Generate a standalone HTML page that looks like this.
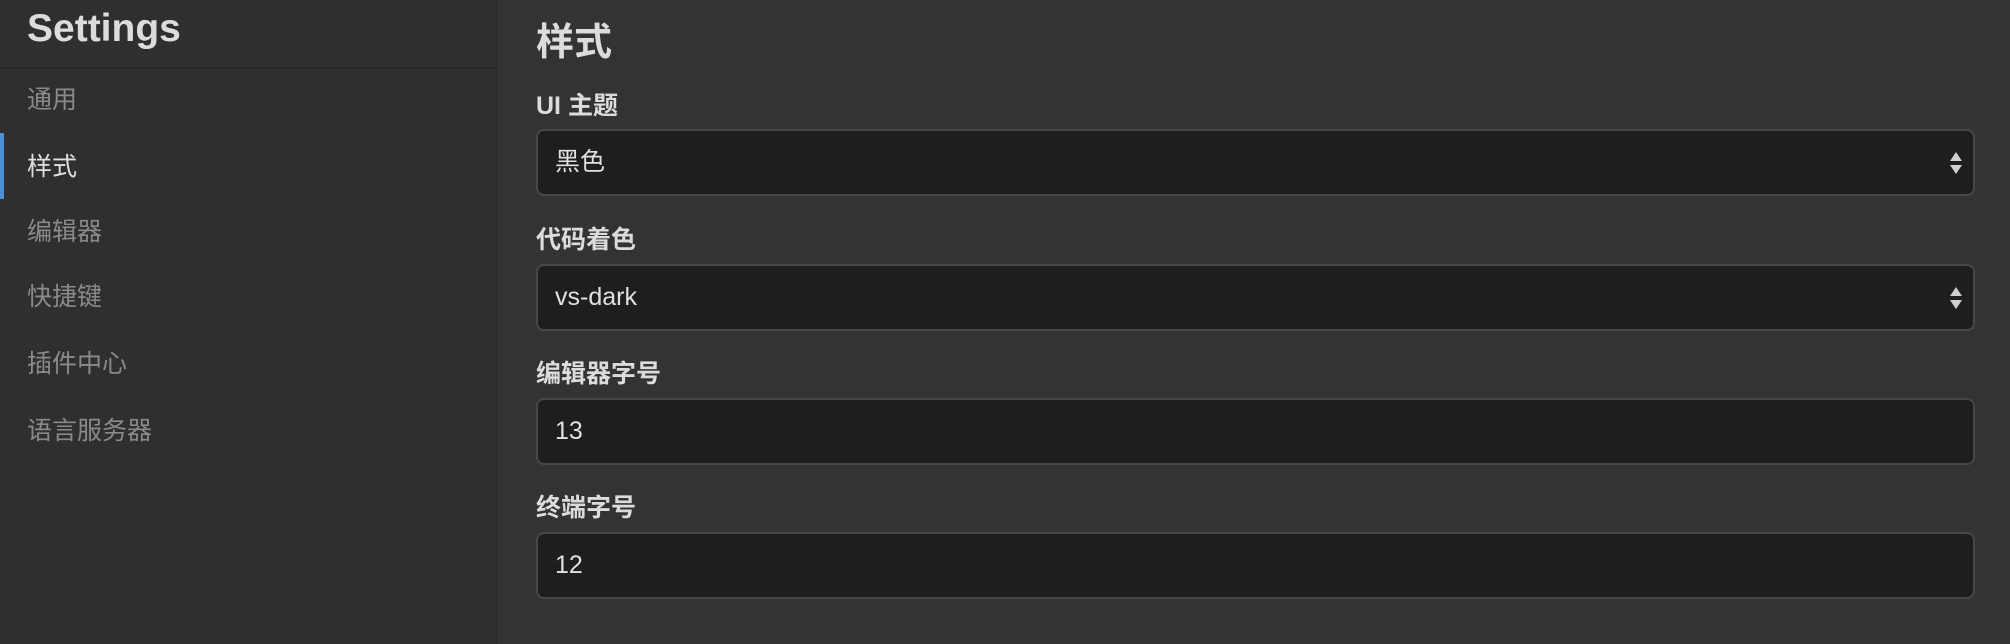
<!DOCTYPE html>
<html><head><meta charset="utf-8"><style>
*{margin:0;padding:0;box-sizing:border-box}
body{width:2010px;height:644px;background:#333333;font-family:"Liberation Sans","Noto Sans CJK SC",sans-serif;position:relative;overflow:hidden;color:#ddd}
.side{position:absolute;left:0;top:0;width:497px;height:644px;background:#2f2f2f;border-right:1px solid #2a2a2a}
.title{position:absolute;left:27px;top:7px;font-size:39px;font-weight:bold;color:#dcdcdc}
.hline{position:absolute;left:0;top:67px;width:497px;height:2px;background:#2a2a2a}
.item{position:absolute;left:27px;font-size:25px;color:#8a8a8a;line-height:30px}
.item.active{color:#e0e0e0}
.bar{position:absolute;left:0;top:133px;width:4px;height:66px;background:#4a90d9}
h1{position:absolute;left:536px;top:21px;font-size:38px;font-weight:bold;color:#dcdcdc;line-height:44px}
.lbl{position:absolute;left:536px;font-size:25px;font-weight:bold;color:#dcdcdc;line-height:30px}
.box{position:absolute;left:536px;width:1439px;height:67px;background:#1e1e1e;border:2px solid #474747;border-radius:8px;font-size:25px;color:#e0e0e0;line-height:63px;padding-left:17px}
.arr{position:absolute;right:10px;top:19px;width:14px;height:26px}
</style></head><body>
<div class="side">
<div class="title">Settings</div>
<div class="hline"></div>
<div class="item" style="top:85px">通用</div>
<div class="bar"></div>
<div class="item active" style="top:152px">样式</div>
<div class="item" style="top:217px">编辑器</div>
<div class="item" style="top:282px">快捷键</div>
<div class="item" style="top:349px">插件中心</div>
<div class="item" style="top:416px">语言服务器</div>
</div>
<h1>样式</h1>
<div class="lbl" style="top:91px">UI 主题</div>
<div class="box" style="top:129px">黑色<svg class="arr" viewBox="0 0 14 26"><path d="M7 2L13 11H1Z M7 24L13 15H1Z" fill="#cfcfcf"/></svg></div>
<div class="lbl" style="top:225px">代码着色</div>
<div class="box" style="top:264px">vs-dark<svg class="arr" viewBox="0 0 14 26"><path d="M7 2L13 11H1Z M7 24L13 15H1Z" fill="#cfcfcf"/></svg></div>
<div class="lbl" style="top:359px">编辑器字号</div>
<div class="box" style="top:398px">13</div>
<div class="lbl" style="top:493px">终端字号</div>
<div class="box" style="top:532px">12</div>
</body></html>
